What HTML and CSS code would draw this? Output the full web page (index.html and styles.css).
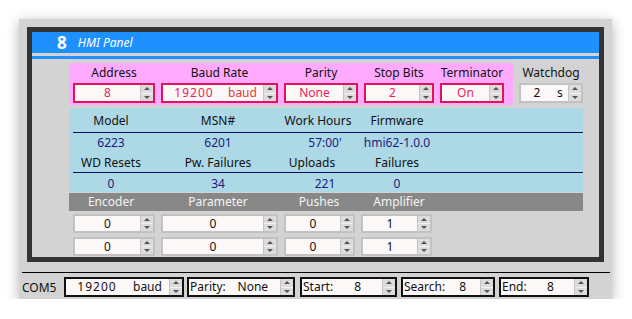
FILE: index.html
```html
<!DOCTYPE html>
<html lang="en">
<head>
    <meta charset="UTF-8">
    <title>HMI Panel</title>
    <link rel="stylesheet" href="styles.css">
</head>
<body>
    <div class="window">
        <div class="frame">
            <div class="titlebar">
                <span class="num">8</span>
                <span class="title">HMI Panel</span>
            </div>
            <div class="rule"></div>

            <div class="content">
                <!-- serial settings -->
                <div class="top-row">
                    <div class="pink">
                        <div class="field c1">
                            <div class="label">Address</div>
                            <div class="box red"><span class="val">8</span><span class="spin"><b></b><b class="dn"></b></span></div>
                        </div>
                        <div class="field c2">
                            <div class="label">Baud Rate</div>
                            <div class="box red"><span class="num wide">19200</span><span class="unit">baud</span><span class="spin"><b></b><b class="dn"></b></span></div>
                        </div>
                        <div class="field c3">
                            <div class="label">Parity</div>
                            <div class="box red"><span class="val">None</span><span class="spin"><b></b><b class="dn"></b></span></div>
                        </div>
                        <div class="field c4">
                            <div class="label">Stop Bits</div>
                            <div class="box red"><span class="val">2</span><span class="spin"><b></b><b class="dn"></b></span></div>
                        </div>
                        <div class="field c5">
                            <div class="label">Terminator</div>
                            <div class="box red"><span class="val">On</span><span class="spin"><b></b><b class="dn"></b></span></div>
                        </div>
                    </div>
                    <div class="field c6">
                        <div class="label">Watchdog</div>
                        <div class="box gray"><span class="num wd">2</span><span class="unit dark">s</span><span class="spin"><b></b><b class="dn"></b></span></div>
                    </div>
                </div>

                <!-- device info -->
                <div class="info">
                    <div class="irow r-head">
                        <span>Model</span><span>MSN#</span><span>Work Hours</span><span>Firmware</span>
                    </div>
                    <div class="iline"></div>
                    <div class="irow r-val">
                        <span>6223</span><span>6201</span><span class="shift">57:00'</span><span>hmi62-1.0.0</span>
                    </div>
                    <div class="irow r-head2">
                        <span>WD Resets</span><span>Pw. Failures</span><span class="back">Uploads</span><span>Failures</span>
                    </div>
                    <div class="iline"></div>
                    <div class="irow r-val2">
                        <span>0</span><span>34</span><span class="shift">221</span><span>0</span>
                    </div>
                </div>

                <!-- parameters -->
                <div class="phead">
                    <span>Encoder</span><span>Parameter</span><span>Pushes</span><span>Amplifier</span>
                </div>
                <div class="prow">
                    <div class="box gray p1"><span class="val dark">0</span><span class="spin"><b></b><b class="dn"></b></span></div>
                    <div class="box gray p2"><span class="val dark">0</span><span class="spin"><b></b><b class="dn"></b></span></div>
                    <div class="box gray p3"><span class="val dark">0</span><span class="spin"><b></b><b class="dn"></b></span></div>
                    <div class="box gray p4"><span class="val dark">1</span><span class="spin"><b></b><b class="dn"></b></span></div>
                </div>
                <div class="prow">
                    <div class="box gray p1"><span class="val dark">0</span><span class="spin"><b></b><b class="dn"></b></span></div>
                    <div class="box gray p2"><span class="val dark">0</span><span class="spin"><b></b><b class="dn"></b></span></div>
                    <div class="box gray p3"><span class="val dark">0</span><span class="spin"><b></b><b class="dn"></b></span></div>
                    <div class="box gray p4"><span class="val dark">1</span><span class="spin"><b></b><b class="dn"></b></span></div>
                </div>
            </div>
        </div>

        <div class="sep"></div>
        <div class="status">
            <span class="port">COM5</span>
            <div class="sbox s1"><span class="snum wide">19200</span><span class="sunit">baud</span><span class="spin"><b></b><b class="dn"></b></span></div>
            <div class="sbox s2"><span class="slabel">Parity:</span><span class="sval">None</span><span class="spin"><b></b><b class="dn"></b></span></div>
            <div class="sbox s3"><span class="slabel">Start:</span><span class="sval">8</span><span class="spin"><b></b><b class="dn"></b></span></div>
            <div class="sbox s4"><span class="slabel">Search:</span><span class="sval">8</span><span class="spin"><b></b><b class="dn"></b></span></div>
            <div class="sbox s5"><span class="slabel">End:</span><span class="sval">8</span><span class="spin"><b></b><b class="dn"></b></span></div>
        </div>
    </div>
</body>
</html>
```

FILE: styles.css
```css
body {
    margin: 0;
    background: #fff;
    font-family: "Noto Sans", "Open Sans", sans-serif;
    font-size: 12px;
    color: #111;
}

/* window */
.window {
    margin: 19px 0 0 19px;
    width: 593px;
    height: 280px;
    box-sizing: border-box;
    padding: 8px 8px 0 8px;
    background: #d3d3d3;
    box-shadow: 0 3px 12px rgba(0, 0, 0, .3);
}
.frame {
    width: 577px;
    height: 235px;
    box-sizing: border-box;
    border: 5px solid #333;
    display: flex;
    flex-direction: column;
}
.titlebar {
    height: 21px;
    background: #1e90ff;
    color: #fff;
    display: flex;
    align-items: center;
    padding-left: 25px;
}
.titlebar .num {
    font-size: 17px;
    font-weight: bold;
    line-height: 21px;
}
.titlebar .title {
    font-style: italic;
    margin-left: 11px;
}
.rule {
    height: 3px;
    margin-top: 3px;
    background: #1e90ff;
}
.content {
    flex: 1;
    padding: 4px 0 0 37px;
}

/* top settings row */
.top-row {
    display: flex;
    gap: 6px;
}
.pink {
    display: flex;
    gap: 6px;
    background: #ffaaff;
    padding: 0 9px 2px 4px;
}
.c1 { width: 82px; }
.c2 { width: 117px; }
.c3 { width: 74px; }
.c4 { width: 70px; }
.c5 { width: 64px; }
.c6 { width: 64px; }
.label {
    height: 20px;
    line-height: 19px;
    text-align: center;
}

/* spin boxes */
.box {
    display: flex;
    height: 20px;
    box-sizing: border-box;
    background: #fdf8f8;
}
.box.red {
    border: 2px solid #e0145a;
    color: #e8245a;
}
.box.gray {
    border: 2px solid #c2c2c2;
    color: #111;
}
.val {
    flex: 1;
    text-align: center;
    line-height: 16px;
}
.num {
    text-align: center;
    line-height: 16px;
}
.wide {
    width: 62px;
    letter-spacing: 1px;
}
.wd {
    width: 32px;
}
.unit {
    line-height: 16px;
    margin-left: 3px;
    flex: 1;
    color: #e23a3a;
}
.unit.dark {
    color: #111;
    margin-left: 4px;
}
.dark {
    color: #111;
}
.spin {
    width: 12px;
    display: flex;
    flex-direction: column;
    border-left: 1px solid #c4c4c4;
}
.spin b {
    flex: 1;
    background: #dcdcdc;
    display: flex;
    align-items: center;
    justify-content: center;
}
.spin b + b {
    border-top: 1px solid #f2f2f2;
}
.spin b::after {
    content: "";
    border-left: 3px solid transparent;
    border-right: 3px solid transparent;
    border-bottom: 3px solid #555;
}
.spin b.dn::after {
    border-bottom: 0;
    border-top: 3px solid #555;
}

/* info block */
.info {
    width: 514px;
    margin-top: 3px;
    padding-top: 2px;
    background: #add8e6;
}
.irow {
    display: grid;
    grid-template-columns: 84px 130px 70px 88px;
    text-align: center;
}
.r-head { height: 22px; line-height: 22px; }
.r-val { height: 20px; line-height: 20px; color: #1a1a80; }
.r-head2 { height: 19px; line-height: 19px; }
.r-val2 { height: 19px; line-height: 21px; color: #1a1a80; }
.shift { padding-left: 14px; }
.back { padding-right: 12px; }
.iline {
    height: 1px;
    margin-left: 4px;
    background: #0a0a60;
}

/* parameters */
.phead {
    width: 514px;
    height: 18px;
    margin-top: 1px;
    background: #888;
    color: #f4f4f4;
    display: grid;
    grid-template-columns: 84px 130px 72px 88px;
    text-align: center;
    line-height: 18px;
}
.prow {
    display: flex;
    gap: 6px;
    padding-left: 4px;
    margin-top: 3px;
}
.prow + .prow { margin-top: 4px; }
.prow .box { height: 19px; }
.prow .val { line-height: 15px; }
.p1 { width: 82px; }
.p2 { width: 117px; }
.p3 { width: 71px; }
.p4 { width: 71px; }

/* status bar */
.sep {
    margin: 10px -6px 0 -5px;
    border-top: 1px solid #000;
}
.status {
    display: flex;
    align-items: center;
    margin: 4px 0 0 -5px;
    height: 20px;
}
.port {
    width: 42px;
}
.sbox {
    display: flex;
    height: 20px;
    box-sizing: border-box;
    border: 2px solid #111;
    background: #fdf8f8;
    margin-right: 4px;
}
.s1 { width: 120px; margin-right: 3px; }
.s2 { width: 108px; margin-right: 5px; }
.s3 { width: 97px; }
.s4 { width: 94px; }
.s5 { width: 90px; }
.snum {
    text-align: center;
    line-height: 16px;
}
.sunit {
    flex: 1;
    margin-left: 5px;
    line-height: 16px;
}
.slabel {
    padding-left: 1px;
    line-height: 16px;
}
.sval {
    flex: 1;
    text-align: center;
    line-height: 16px;
}
```
